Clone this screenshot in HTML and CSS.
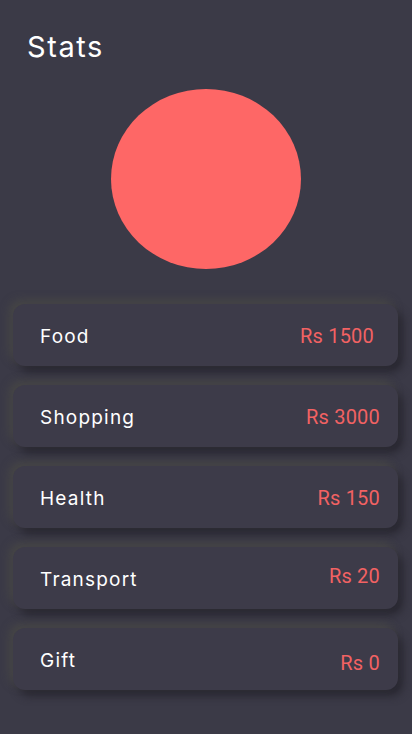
FILE: index.html
```html
<!DOCTYPE html>
<html lang="en">
<head>
<meta charset="utf-8">
<title>Stats</title>
<link rel="stylesheet" href="styles.css">
</head>
<body>
<main class="screen">
  <h1 class="title">Stats</h1>
  <div class="chart"><div class="pie"></div></div>
  <ul class="list">
    <li class="card"><span class="label">Food</span><span class="value value-food">Rs 1500</span></li>
    <li class="card"><span class="label">Shopping</span><span class="value">Rs 3000</span></li>
    <li class="card"><span class="label">Health</span><span class="value">Rs 150</span></li>
    <li class="card"><span class="label">Transport</span><span class="value value-up">Rs 20</span></li>
    <li class="card"><span class="label">Gift</span><span class="value value-down">Rs 0</span></li>
  </ul>
</main>
</body>
</html>
```

FILE: styles.css
```css
html, body {
  margin: 0;
  padding: 0;
  background: #3b3a47;
}
.screen {
  width: 412px;
  height: 734px;
  box-sizing: border-box;
  padding: 29px 0 0;
  font-family: "Inter", "Noto Sans", sans-serif;
  color: #ffffff;
}
.title {
  margin: 0 0 0 27px;
  font-size: 29px;
  font-weight: 400;
  line-height: 36px;
  letter-spacing: 1.6px;
}
.chart {
  display: flex;
  justify-content: center;
  margin-top: 24px;
}
.pie {
  width: 190px;
  height: 180px;
  border-radius: 50%;
  background: #fe6766;
}
.list {
  list-style: none;
  margin: 35px 0 0 13px;
  padding: 0;
  width: 385px;
  display: flex;
  flex-direction: column;
  gap: 19px;
}
.card {
  height: 62px;
  box-sizing: border-box;
  padding: 0 18px 0 27px;
  display: flex;
  align-items: center;
  justify-content: space-between;
  background: #3d3b49;
  border-radius: 12px;
  box-shadow: -4px -4px 8px rgba(80, 80, 70, 0.55), 5px 6px 9px rgba(36, 35, 44, 0.8);
}
.label {
  font-size: 19px;
  letter-spacing: 1.2px;
  padding-top: 3px;
}
.value {
  font-family: "Roboto", "Noto Sans", sans-serif;
  font-size: 20px;
  letter-spacing: 0.2px;
  color: #f26263;
  padding-top: 2px;
}
.value-food { margin-right: 6px; }
.value-up { position: relative; top: -3px; }
.value-down { position: relative; top: 3px; }
```
